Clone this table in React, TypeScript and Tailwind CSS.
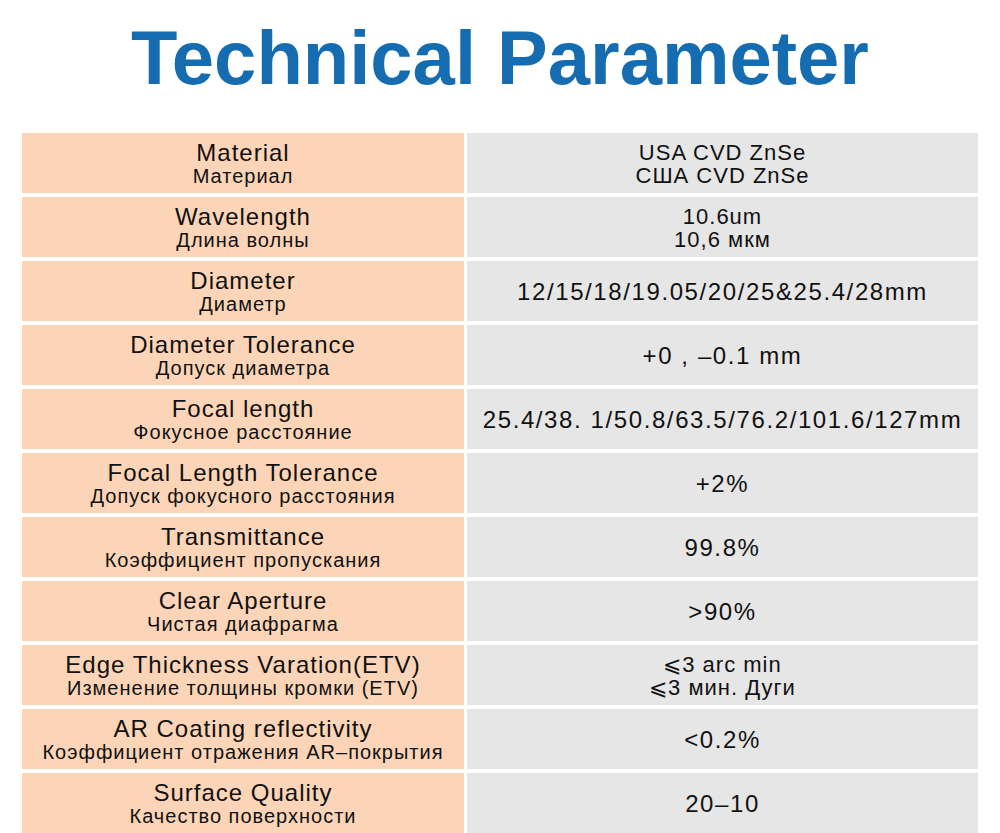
const rows: { en: string; ru: string; value: string[] }[] = [
  { en: "Material", ru: "Материал", value: ["USA CVD ZnSe", "США CVD ZnSe"] },
  { en: "Wavelength", ru: "Длина волны", value: ["10.6um", "10,6 мкм"] },
  { en: "Diameter", ru: "Диаметр", value: ["12/15/18/19.05/20/25&25.4/28mm"] },
  { en: "Diameter Tolerance", ru: "Допуск диаметра", value: ["+0 , –0.1 mm"] },
  { en: "Focal length", ru: "Фокусное расстояние", value: ["25.4/38. 1/50.8/63.5/76.2/101.6/127mm"] },
  { en: "Focal Length Tolerance", ru: "Допуск фокусного расстояния", value: ["+2%"] },
  { en: "Transmittance", ru: "Коэффициент пропускания", value: ["99.8%"] },
  { en: "Clear Aperture", ru: "Чистая диафрагма", value: [">90%"] },
  { en: "Edge Thickness Varation(ETV)", ru: "Изменение толщины кромки (ETV)", value: ["⩽3 arc min", "⩽3 мин. Дуги"] },
  { en: "AR Coating reflectivity", ru: "Коэффициент отражения AR–покрытия", value: ["<0.2%"] },
  { en: "Surface Quality", ru: "Качество поверхности", value: ["20–10"] },
];

export default function App() {
  return (
    <div className="w-[1000px] h-[833px] overflow-hidden bg-white text-[#111] font-['Liberation_Sans',Arial,sans-serif]">
      <h1 className="pt-[20px] text-center text-[76px] leading-[75px] font-bold text-[#166cb0]">
        Technical Parameter
      </h1>

      <div className="mt-[38px] mx-[22px] flex flex-col gap-[4px]">
        {rows.map((row) => (
          <div key={row.en} className="flex gap-[3px] h-[60px]">
            <div className="w-[442px] bg-[#fcd5b8] flex flex-col items-center justify-center">
              <div className="text-[24px] leading-[25px] tracking-[1px]">{row.en}</div>
              <div className="text-[20px] leading-[22px] tracking-[1px]">{row.ru}</div>
            </div>
            <div className="flex-1 bg-[#e6e6e6] flex flex-col items-center justify-center pt-[2px]">
              {row.value.length === 1 ? (
                <div className="text-[24px] leading-[26px] tracking-[1.6px]">{row.value[0]}</div>
              ) : (
                row.value.map((v) => (
                  <div key={v} className="text-[22px] leading-[23px] tracking-[1px]">
                    {v}
                  </div>
                ))
              )}
            </div>
          </div>
        ))}
      </div>
    </div>
  );
}
